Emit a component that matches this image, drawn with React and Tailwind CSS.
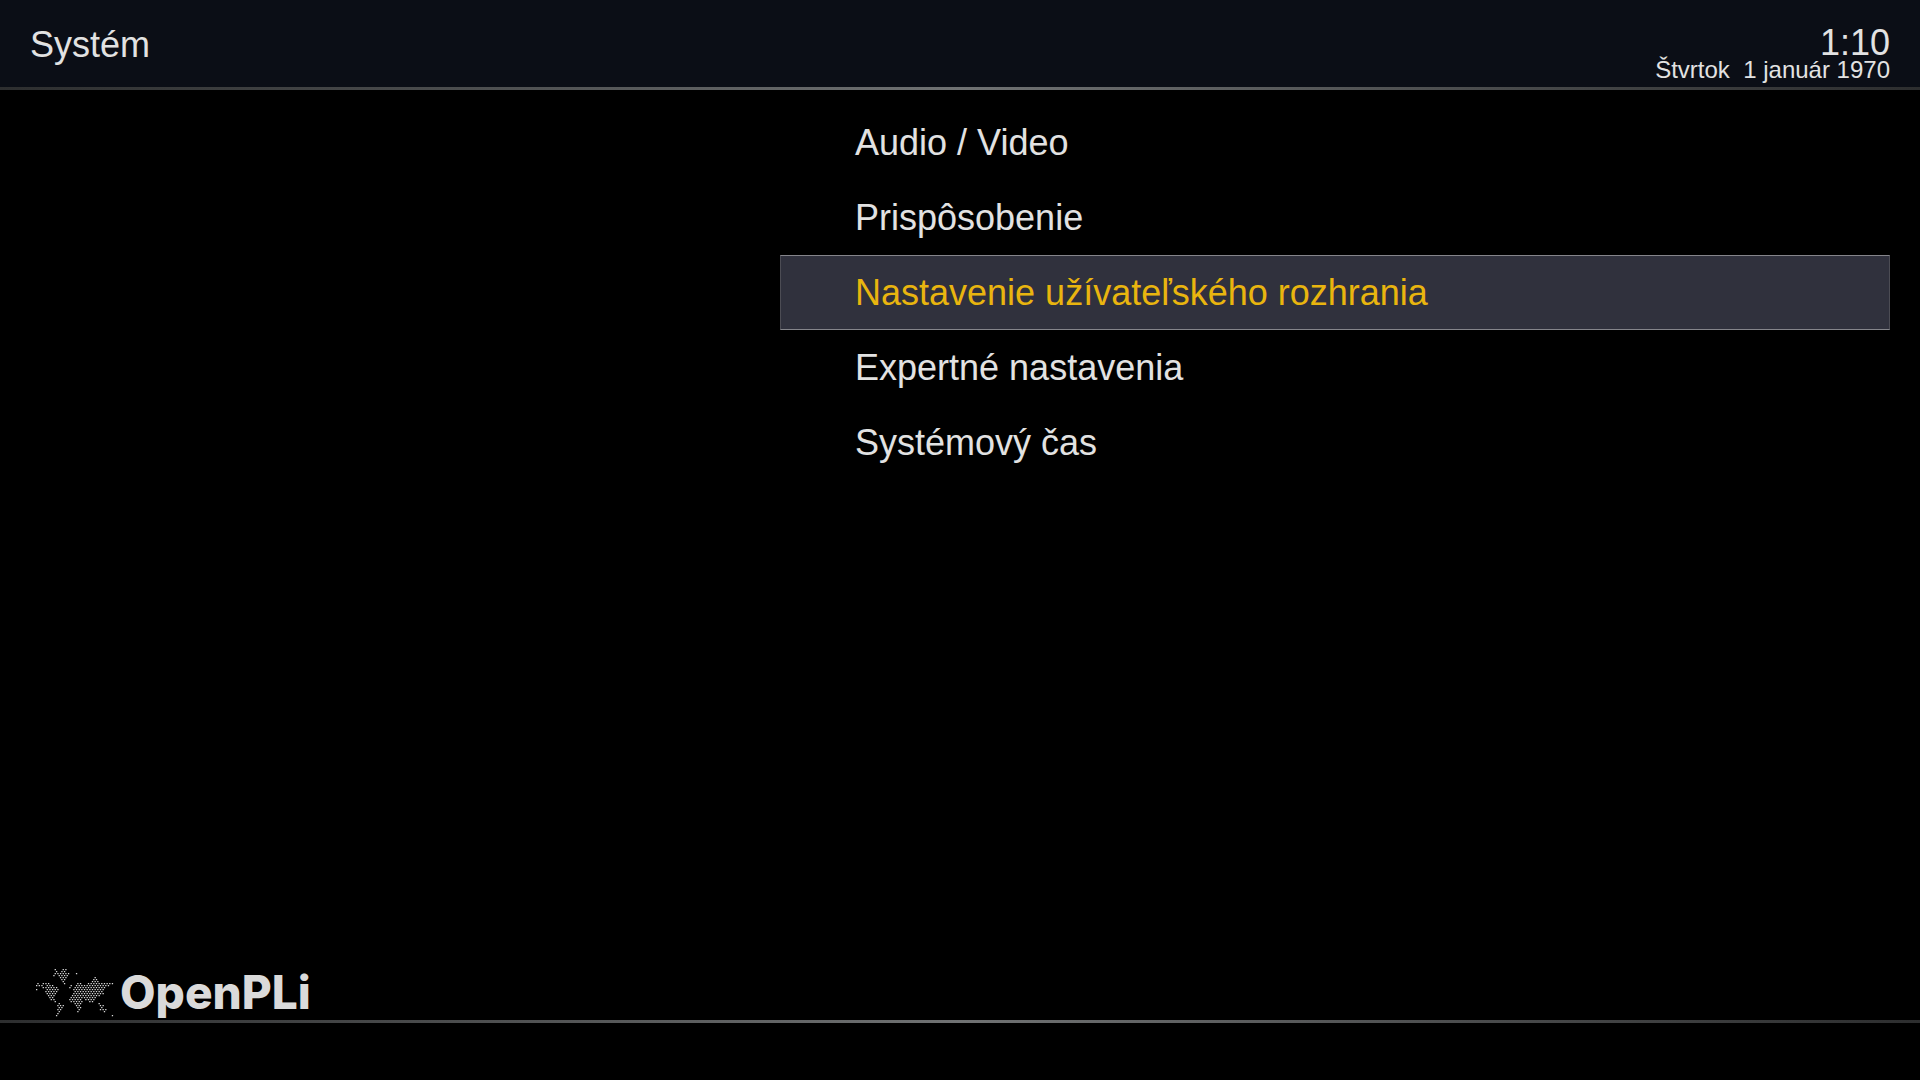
import clsx from "clsx";

const menuItems = [
    "Audio / Video",
    "Prispôsobenie",
    "Nastavenie užívateľského rozhrania",
    "Expertné nastavenia",
    "Systémový čas",
];

const selected = 2;

// dotted world map, one entry per row of dots: [from, to] spans
const mapRows = [
    [[17, 20], [24, 31]],
    [[18, 22], [23, 30]],
    [[17, 32], [39, 40]],
    [[17, 18], [21, 32]],
    [[23, 30], [57, 59]],
    [[24, 30], [56, 60]],
    [[26, 29], [54, 62]],
    [[0, 2], [6, 12], [27, 29], [40, 44], [50, 78]],
    [[0, 7], [8, 17], [33, 35], [39, 74]],
    [[4, 22], [32, 34], [38, 69]],
    [[0, 2], [8, 23], [36, 67]],
    [[8, 22], [36, 67]],
    [[9, 19], [37, 67]],
    [[10, 18], [35, 39], [41, 65]],
    [[11, 18], [33, 46], [47, 60]],
    [[13, 18], [33, 46], [48, 59]],
    [[18, 20], [34, 46], [53, 56]],
    [[20, 24], [37, 44], [61, 64]],
    [[19, 27], [38, 44], [63, 69]],
    [[20, 27], [39, 44], [63, 67]],
    [[21, 26], [40, 43], [62, 70]],
    [[22, 24], [41, 43], [66, 68]],
    [[20, 22]],
    [[19, 21], [74, 76]],
];

function WorldMap() {
    const dots = [];
    mapRows.forEach((spans, row) => {
        for (let x = row % 2 ? 1.33 : 0; x < 80; x += 2.66) {
            if (spans.some(([from, to]) => x >= from && x <= to)) {
                dots.push(`M${x.toFixed(2)} ${row * 2}h1.3v1.2h-1.3z`);
            }
        }
    });
    return (
        <svg viewBox="0 -3 80 52" className="h-[52px] w-20" aria-hidden="true">
            <path d={dots.join("")} fill="#dadada" />
        </svg>
    );
}

function Divider() {
    return (
        <div className="h-[3px] bg-linear-to-r from-[#2d2e2f] via-[#707273] to-[#2d2e2f]" />
    );
}

export default function App() {
    return (
        <div className="flex min-h-screen flex-col bg-black font-['Liberation_Sans',sans-serif] text-[#e2e2e2]">
            <header>
                <div className="flex h-[87px] items-start justify-between bg-[#0b0e16] px-[30px]">
                    <h1 className="mt-[25px] text-4xl">Systém</h1>
                    <div className="mt-[25px] text-right">
                        <div className="text-4xl/9">1:10</div>
                        <div className="text-2xl/[18px] whitespace-pre">Štvrtok  1 január 1970</div>
                    </div>
                </div>
                <Divider />
            </header>

            {/* Setup menu */}
            <main className="flex flex-1 justify-end pt-[15px] pr-[30px]">
                <nav className="w-[1110px]">
                    {menuItems.map((item, i) => (
                        <button
                            key={item}
                            className={clsx(
                                "block h-[75px] w-full border pl-[74px] text-left text-4xl",
                                i === selected
                                    ? "border-x-[#4c4c54] border-y-[#85858b] bg-[#30313d] text-[#e9b50f]"
                                    : "border-transparent"
                            )}
                        >
                            {item}
                        </button>
                    ))}
                </nav>
            </main>

            <footer>
                <div className="flex items-center gap-1 pl-9">
                    <WorldMap />
                    <span className="font-['Inter',sans-serif] text-[46px]/14 font-extrabold text-[#dadada]">
                        OpenPLi
                    </span>
                </div>
                <Divider />
                <div className="h-[57px]" />
            </footer>
        </div>
    );
}
